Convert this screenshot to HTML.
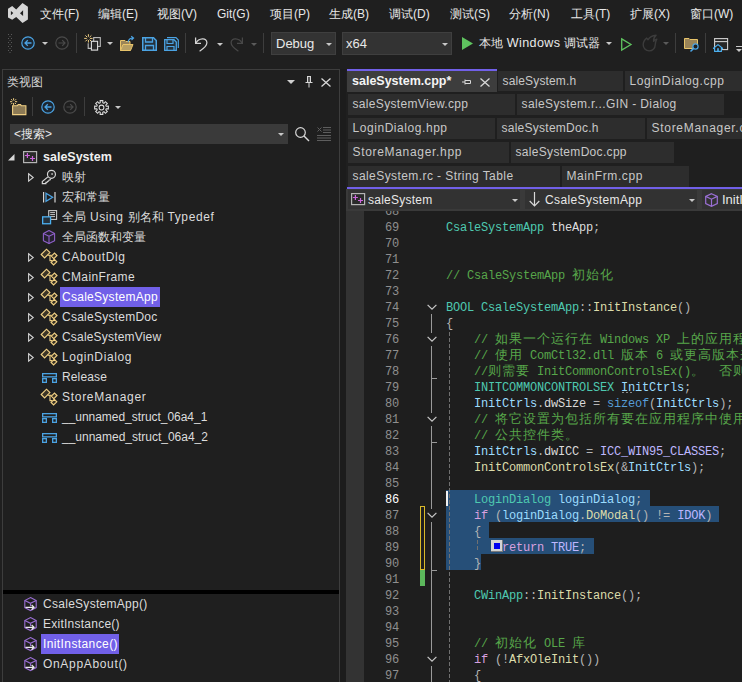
<!DOCTYPE html>
<html><head><meta charset="utf-8">
<style>
*{margin:0;padding:0;box-sizing:border-box}
html,body{width:742px;height:682px;overflow:hidden;background:#1f1f1f}
body{position:relative;font-family:"Liberation Sans",sans-serif;font-size:12px;color:#dcdcdc}
.a{position:absolute}
.t{position:absolute;white-space:pre;line-height:14px}
svg{position:absolute;overflow:visible}
.menu{top:7px;color:#e8e8e8}
.sep{position:absolute;width:1px;background:#3d3d3d}
.combo{position:absolute;background:#333333;border:1px solid #3f3f3f}
.arr{position:absolute;width:0;height:0;border-left:3px solid transparent;border-right:3px solid transparent;border-top:3px solid #c8c8c8}
.arrd{border-top-color:#5a5a5a}
.row{position:absolute;height:20px;line-height:20px;white-space:pre;color:#dcdcdc;font-size:12px}
.zh{font-size:12px;letter-spacing:0}
.tab{position:absolute;background:#2d2d2d;height:21px;line-height:21px;white-space:pre;color:#c8c8c8;padding-left:4.5px;font-size:12px}
.code{position:absolute;left:446px;height:16px;line-height:16px;white-space:pre;font-family:"Liberation Mono",monospace;font-size:12px;letter-spacing:-0.2px;color:#dcdcdc}
.ln{position:absolute;left:360px;width:39px;text-align:right;height:16px;line-height:16px;font-family:"Liberation Mono",monospace;font-size:12px;letter-spacing:-0.2px;color:#8f8f8f}
.c{color:#57a64a}.k{color:#569cd6}.ty{color:#4ec9b0}.fn{color:#dcdcaa}.v{color:#9cdcfe}.m{color:#dadada}.mac{color:#beb7ff}.kw{color:#d8a0df}.op{color:#b4b4b4}
.cj{font-size:13px;letter-spacing:1px}
</style></head><body>

<!-- ===== MENU BAR ===== -->
<svg style="left:4px;top:0px" width="28" height="26" viewBox="0 0 28 26"><path d="M4 8.8 L8.2 6.1 L12.2 9.4 L18.5 3 L23.9 6.7 V19.5 L18.5 22.9 L12.2 17 L8.2 19.8 L4 17.6 Z M6.9 10.9 L9.3 13.1 L6.9 15.3 Z M16 13.2 L19.1 10.3 V16 Z" fill="#d6d6d6" fill-rule="evenodd"/></svg>
<div class="t menu" style="left:40px">文件(F)</div>
<div class="t menu" style="left:98px">编辑(E)</div>
<div class="t menu" style="left:157px">视图(V)</div>
<div class="t menu" style="left:217px">Git(G)</div>
<div class="t menu" style="left:270px">项目(P)</div>
<div class="t menu" style="left:329px">生成(B)</div>
<div class="t menu" style="left:389px">调试(D)</div>
<div class="t menu" style="left:450px">测试(S)</div>
<div class="t menu" style="left:509px">分析(N)</div>
<div class="t menu" style="left:571px">工具(T)</div>
<div class="t menu" style="left:630px">扩展(X)</div>
<div class="t menu" style="left:690px">窗口(W)</div>

<!-- ===== TOOLBAR ===== -->
<svg style="left:8px;top:34px" width="6" height="19"><g fill="#5a5a5a">
<rect x="0" y="0" width="1" height="1"/><rect x="3" y="0" width="1" height="1"/>
<rect x="1.5" y="2" width="1" height="1"/>
<rect x="0" y="4" width="1" height="1"/><rect x="3" y="4" width="1" height="1"/>
<rect x="1.5" y="6" width="1" height="1"/>
<rect x="0" y="8" width="1" height="1"/><rect x="3" y="8" width="1" height="1"/>
<rect x="1.5" y="10" width="1" height="1"/>
<rect x="0" y="12" width="1" height="1"/><rect x="3" y="12" width="1" height="1"/>
<rect x="1.5" y="14" width="1" height="1"/>
<rect x="0" y="16" width="1" height="1"/><rect x="3" y="16" width="1" height="1"/>
<rect x="1.5" y="18" width="1" height="1"/>
</g></svg>
<svg style="left:21px;top:36px" width="14" height="14" viewBox="0 0 14 14"><circle cx="7" cy="7" r="6.2" fill="#1c2630" stroke="#4ba3e3" stroke-width="1.2"/><path d="M10.5 7 H4 M6.8 4.2 L4 7 L6.8 9.8" fill="none" stroke="#4ba3e3" stroke-width="1.3"/></svg>
<div class="arr" style="left:42px;top:42px"></div>
<svg style="left:55px;top:36px" width="14" height="14" viewBox="0 0 14 14"><circle cx="7" cy="7" r="6.2" fill="none" stroke="#4a4a4a" stroke-width="1.2"/><path d="M3.5 7 H10 M7.2 4.2 L10 7 L7.2 9.8" fill="none" stroke="#4a4a4a" stroke-width="1.2"/></svg>
<div class="sep" style="left:76px;top:33px;height:20px"></div>
<svg style="left:82px;top:32px" width="22" height="22" viewBox="0 0 22 22">
<g stroke="#f0cf83" stroke-width="1" stroke-linecap="round"><path d="M6.4 2.6 V4.4 M6.4 8.4 V10.2 M2.6 6.4 H4.4 M8.4 6.4 H10.2 M3.7 3.7 L4.9 4.9 M7.9 7.9 L9.1 9.1 M9.1 3.7 L7.9 4.9 M4.9 7.9 L3.7 9.1"/></g>
<rect x="11.7" y="5.6" width="6.6" height="8.8" fill="#1f1f1f" stroke="#bdbdbd" stroke-width="1.1"/>
<path d="M6.2 11.2 V16.4 H9.4" fill="none" stroke="#bdbdbd" stroke-width="1.1"/>
<rect x="9.4" y="9.3" width="6.2" height="8.8" fill="#2a2a2a" stroke="#e0e0e0" stroke-width="1.1"/>
</svg>
<div class="arr" style="left:107px;top:42px"></div>
<svg style="left:120px;top:36px" width="16" height="15" viewBox="0 0 16 15">
<path d="M0.5 4.5 H5 L6 5.5 H10 V14.5 H0.5 Z" fill="#9a8458" stroke="#e8c46a"/>
<path d="M0.5 14.5 L3 8.5 H13 L10.5 14.5 Z" fill="#b79f63" stroke="#e8c46a"/>
<path d="M8 6 Q9 2 13 2 M11.2 0.3 L13.5 2 L11.5 4" fill="none" stroke="#4ba3e3" stroke-width="1.2"/>
</svg>
<svg style="left:142px;top:37px" width="15" height="14" viewBox="0 0 15 14">
<path d="M0.75 0.75 H11.5 L14.25 3.5 V13.25 H0.75 Z" fill="#25313b" stroke="#4ba3e3" stroke-width="1.5"/>
<path d="M3.5 1 V5 H10.5 V1 M3.5 13 V8.5 H11.5 V13" fill="none" stroke="#4ba3e3" stroke-width="1.3"/>
</svg>
<svg style="left:164px;top:37px" width="15" height="14" viewBox="0 0 15 14">
<path d="M3 0.7 H12 L14.3 3 V11" fill="none" stroke="#4ba3e3" stroke-width="1.2"/>
<path d="M0.7 2.7 H10 L12.3 5 V13.3 H0.7 Z" fill="#25313b" stroke="#4ba3e3" stroke-width="1.3"/>
<path d="M3 3 V6.5 H9 V3 M3 13 V9.5 H10 V13" fill="none" stroke="#4ba3e3" stroke-width="1.2"/>
</svg>
<div class="sep" style="left:185px;top:33px;height:20px"></div>
<svg style="left:190px;top:32px" width="22" height="22" viewBox="0 0 22 22"><path d="M5.6 5.6 V11.4 H11" fill="none" stroke="#d4d4d4" stroke-width="1.25"/><path d="M6 11 C8.6 6.2 16.9 5 16.9 10.8 C16.9 13.8 13.6 16.6 9.6 19.2" fill="none" stroke="#d4d4d4" stroke-width="1.25"/></svg>
<div class="arr" style="left:217px;top:43px"></div>
<svg style="left:226px;top:32px" width="22" height="22" viewBox="0 0 22 22"><path d="M16.4 5.6 V11.4 H11" fill="none" stroke="#484848" stroke-width="1.25"/><path d="M16 11 C13.4 6.2 5.1 5 5.1 10.8 C5.1 13.8 8.4 16.6 12.4 19.2" fill="none" stroke="#484848" stroke-width="1.25"/></svg>
<div class="arr arrd" style="left:251px;top:43px"></div>
<div class="sep" style="left:263px;top:33px;height:20px"></div>
<div class="combo" style="left:271px;top:32px;width:65px;height:23px"></div>
<div class="t" style="left:276px;top:37px;color:#e8e8e8;font-size:13px">Debug</div>
<div class="arr" style="left:326px;top:43px"></div>
<div class="combo" style="left:342px;top:32px;width:110px;height:23px"></div>
<div class="t" style="left:346px;top:37px;color:#e8e8e8;font-size:13px">x64</div>
<div class="arr" style="left:442px;top:43px"></div>
<svg style="left:462px;top:37px" width="11" height="13" viewBox="0 0 11 13"><path d="M0 0 L11 6.5 L0 13 Z" fill="#5fc35f"/></svg>
<div class="t" style="left:479px;top:36px;color:#e8e8e8"><span>本地</span><span style="font-size:12.6px;letter-spacing:0.35px"> Windows </span><span>调试器</span></div>
<div class="arr" style="left:606px;top:42px"></div>
<svg style="left:621px;top:38px" width="11" height="13" viewBox="0 0 11 13"><path d="M0.7 0.9 L10 6.5 L0.7 12.1 Z" fill="none" stroke="#5fc35f" stroke-width="1.3"/></svg>
<svg style="left:638px;top:32px" width="24" height="22" viewBox="0 0 24 22"><path d="M8.7 6.1 Q5.2 8.6 5.2 12.8 A5.9 5.9 0 0 0 17.2 13 Q17.3 9.8 18.8 7.1 Q16.5 7.8 15.6 9.3 Q15.2 5.8 18.1 3.2 Q12.2 3.6 10.1 7.8 Z" fill="none" stroke="#3c3c3c" stroke-width="1.4" stroke-linejoin="round"/></svg>
<div class="arr arrd" style="left:663px;top:42px"></div>
<div class="sep" style="left:675px;top:33px;height:20px"></div>
<svg style="left:684px;top:38px" width="16" height="14" viewBox="0 0 16 14">
<path d="M0.5 0.5 H5 L6 1.5 H13.5 V10.5 H0.5 Z" fill="#9a8458" stroke="#e8c46a"/>
<circle cx="11.5" cy="8.5" r="2.6" fill="#1f1f1f" stroke="#4ba3e3" stroke-width="1.2"/>
<path d="M9.6 10.4 L6.5 13.5" stroke="#4ba3e3" stroke-width="1.5"/>
</svg>
<div class="sep" style="left:705px;top:33px;height:20px"></div>
<svg style="left:712px;top:36px" width="18" height="17" viewBox="0 0 18 17"><rect x="2.6" y="2.6" width="13" height="11" fill="#262626" stroke="#cfcfcf" stroke-width="1.1"/><path d="M2.6 5.6 H15.6" stroke="#cfcfcf" stroke-width="1.1"/><path d="M1.5 12.3 L6 8.6 L10.5 12.3 H9.4 V15.4 H2.6 V12.3 Z" fill="#1f1f1f" stroke="#4cb0f0" stroke-width="1.15" stroke-linejoin="round"/><rect x="5.2" y="12.2" width="1.6" height="3" fill="#4cb0f0"/></svg>
<svg style="left:736px;top:46px" width="6" height="8" viewBox="0 0 6 8"><path d="M0 0.5 H6" stroke="#c8c8c8"/><path d="M0 3 H6 L3 6 Z" fill="#c8c8c8"/></svg>

<!-- ===== LEFT PANEL (CLASS VIEW) ===== -->
<div class="a" style="left:2px;top:69px;width:338px;height:620px;border:1px solid #3d3d3d;background:#1f1f1f"></div>
<div class="t" style="left:7px;top:75px;color:#d4d4d4;font-size:12.4px">类视图</div>
<div class="arr" style="left:287px;top:80px;border-width:4px 4px 0 4px;border-top-color:#d0d0d0"></div>
<svg style="left:305px;top:76px" width="8" height="12" viewBox="0 0 8 12"><path d="M2 0.5 H6 M2.5 0.5 V6.5 M5.5 0.5 V6.5 M0.5 6.5 H7.5 M4 6.5 V11.5" fill="none" stroke="#d8d8d8"/><rect x="2.5" y="1" width="3" height="5.5" fill="#d8d8d8" opacity="0.3"/></svg>
<svg style="left:321px;top:78px" width="10" height="9" viewBox="0 0 10 9"><path d="M0.5 0.5 L9.5 8.5 M9.5 0.5 L0.5 8.5" stroke="#d8d8d8" stroke-width="1.3"/></svg>

<svg style="left:6px;top:94px" width="22" height="22" viewBox="0 0 22 22">
<path d="M6.6 11.8 H11.2 L12.2 10.6 H14.6 L15.3 11.8 H19.9 V20.6 H6.6 Z" fill="#8c7a55" stroke="#f0cf83" stroke-width="1.1"/>
<g stroke="#f0cf83" stroke-width="1" stroke-linecap="round"><path d="M7.6 4.6 V6 M7.6 9.4 V10.8 M4.4 7.7 H5.8 M9.4 7.7 H10.8 M5.4 5.5 L6.2 6.3 M9 9.1 L9.8 9.9 M9.8 5.5 L9 6.3 M6.2 9.1 L5.4 9.9"/></g>
</svg>
<div class="sep" style="left:32px;top:97px;height:19px"></div>
<svg style="left:41px;top:100px" width="14" height="14" viewBox="0 0 14 14"><circle cx="7" cy="7" r="6.2" fill="#1c2630" stroke="#4ba3e3" stroke-width="1.2"/><path d="M10.5 7 H4 M6.8 4.2 L4 7 L6.8 9.8" fill="none" stroke="#4ba3e3" stroke-width="1.3"/></svg>
<svg style="left:63px;top:100px" width="14" height="14" viewBox="0 0 14 14"><circle cx="7" cy="7" r="6.2" fill="none" stroke="#4a4a4a" stroke-width="1.2"/><path d="M3.5 7 H10 M7.2 4.2 L10 7 L7.2 9.8" fill="none" stroke="#4a4a4a" stroke-width="1.2"/></svg>
<div class="sep" style="left:84px;top:97px;height:19px"></div>
<svg style="left:94px;top:100px" width="15" height="15" viewBox="0 0 15 15"><path d="M12.23 6.23 L14.37 6.16 L14.37 8.84 L12.23 8.77 L11.74 9.95 L13.30 11.41 L11.41 13.30 L9.95 11.74 L8.77 12.23 L8.84 14.37 L6.16 14.37 L6.23 12.23 L5.05 11.74 L3.59 13.30 L1.70 11.41 L3.26 9.95 L2.77 8.77 L0.63 8.84 L0.63 6.16 L2.77 6.23 L3.26 5.05 L1.70 3.59 L3.59 1.70 L5.05 3.26 L6.23 2.77 L6.16 0.63 L8.84 0.63 L8.77 2.77 L9.95 3.26 L11.41 1.70 L13.30 3.59 L11.74 5.05 Z" fill="none" stroke="#dcdcdc" stroke-width="1.05" stroke-linejoin="miter"/><circle cx="7.5" cy="7.5" r="2.4" fill="none" stroke="#dcdcdc" stroke-width="1.05"/></svg>
<div class="arr" style="left:115px;top:106px"></div>

<div class="a" style="left:10px;top:124px;width:278px;height:20px;background:#3a3a3a"></div>
<div class="t" style="left:14px;top:127px;color:#e8e8e8">&lt;搜索&gt;</div>
<div class="arr" style="left:278px;top:133px"></div>
<svg style="left:295px;top:127px" width="15" height="15" viewBox="0 0 15 15"><circle cx="5.5" cy="5.5" r="4.8" fill="none" stroke="#d8d8d8" stroke-width="1.2"/><path d="M9 9 L14 14" stroke="#d8d8d8" stroke-width="1.4"/></svg>
<svg style="left:317px;top:127px" width="15" height="14" viewBox="0 0 15 14"><g stroke="#5e5e5e" stroke-width="1"><path d="M0.5 0.5 L4.5 4.5 M4.5 0.5 L0.5 4.5 M6 0.5 H14 M6 3 H14 M6 5.5 H14 M0 8.5 H14 M0 11 H14 M0 13.5 H14"/></g></svg>

<!-- tree -->

<svg style="left:8px;top:154px" width="7" height="7" viewBox="0 0 7 7"><path d="M6.5 0 V6.5 H0 Z" fill="#d8d8d8"/></svg>
<svg style="left:23px;top:151px" width="15" height="12" viewBox="0 0 15 12"><rect x="0.6" y="0.6" width="13" height="11" fill="#2a2a2a" stroke="#b4b4b4" stroke-width="1.2"/><path d="M4.4 2 V7 M1.9 4.5 H6.9 M9.5 5 V10 M7 7.5 H12" stroke="#cc66dd" stroke-width="1.2"/></svg>
<div class="row" style="left:43px;top:147px;font-weight:bold;color:#f0f0f0;font-size:12.5px">saleSystem</div>
<svg style="left:28px;top:173px" width="6" height="9" viewBox="0 0 6 9"><path d="M0.6 0.8 L5.2 4.5 L0.6 8.2 Z" fill="none" stroke="#d0d0d0" stroke-width="1.1"/></svg>
<svg style="left:38px;top:167px" width="22" height="22" viewBox="0 0 22 22"><g fill="none" stroke="#d8d8d8" stroke-width="1.15" stroke-linejoin="miter"><path d="M9.9 9.9 L4.3 14.5 V16.6 H7.9 V15.3 H9 L9.6 14.2 H10.5 L11.1 13 H12 L12.6 11.9"/><circle cx="13.45" cy="7.3" r="4" fill="#262626"/></g><rect x="13.3" y="6.2" width="1.6" height="1.6" fill="#bdbdbd"/></svg>
<div class="row" id="tr0" style="left:62px;top:167px;letter-spacing:0.000px"><span class="zh">映射</span></div>
<svg style="left:43px;top:192px" width="13" height="11" viewBox="0 0 13 11"><path d="M0.6 0 V10.5 M12 0 V10.5" stroke="#d4d4d4" stroke-width="1.2"/><path d="M3 1.2 L9.6 5.25 L3 9.3 Z" fill="none" stroke="#4ba3e3" stroke-width="1.3"/></svg>
<div class="row" id="tr1" style="left:62px;top:187px;letter-spacing:0.000px"><span class="zh">宏和常量</span></div>
<svg style="left:38px;top:206px" width="22" height="22" viewBox="0 0 22 22"><rect x="10.7" y="4.6" width="7.9" height="8.8" fill="#1f1f1f" stroke="#c8c8c8" stroke-width="1.1"/><path d="M12.2 6.6 H17 M12.2 8.6 H17 M12.2 10.6 H17" stroke="#c8c8c8" stroke-width="1"/><rect x="4.65" y="10.85" width="7.9" height="6.9" fill="#25313b" stroke="#4cb0f0" stroke-width="1.3"/></svg>
<div class="row" id="tr2" style="left:62px;top:207px;letter-spacing:0.600px"><span class="zh">全局</span> Using <span class="zh">别名和</span> Typedef</div>
<svg style="left:38px;top:226px" width="22" height="22" viewBox="0 0 22 22"><g fill="#262230" stroke="#8e60c8" stroke-width="1.1" stroke-linejoin="round"><path d="M11 4.6 L16.6 7.6 V14.8 L11 17.6 L5.4 14.8 V7.6 Z"/><path d="M5.4 7.6 L11 10.3 L16.6 7.6 M11 10.3 V17.6" fill="none"/></g></svg>
<div class="row" id="tr3" style="left:62px;top:227px;letter-spacing:0.000px"><span class="zh">全局函数和变量</span></div>
<svg style="left:28px;top:253px" width="6" height="9" viewBox="0 0 6 9"><path d="M0.6 0.8 L5.2 4.5 L0.6 8.2 Z" fill="none" stroke="#d0d0d0" stroke-width="1.1"/></svg>
<svg style="left:38px;top:246px" width="22" height="22" viewBox="0 0 22 22"><g fill="#3b3426" stroke="#f0cf83" stroke-width="1.15" stroke-linejoin="miter"><path d="M3.2 8.5 L8.5 3.2 L11.9 6.6 L6.6 11.9 Z"/><path d="M13.3 10.1 L16.5 7 L19 9.5 L15.8 12.6 Z"/><path d="M13.1 16.4 L16.3 13.3 L18.8 15.8 L15.6 18.9 Z"/></g><path d="M9.6 9.2 H13.6 M12 9.2 V14.6 H14.3" fill="none" stroke="#f0cf83" stroke-width="1.15"/></svg>
<div class="row" id="tr4" style="left:62px;top:247px;letter-spacing:0.600px">CAboutDlg</div>
<svg style="left:28px;top:273px" width="6" height="9" viewBox="0 0 6 9"><path d="M0.6 0.8 L5.2 4.5 L0.6 8.2 Z" fill="none" stroke="#d0d0d0" stroke-width="1.1"/></svg>
<svg style="left:38px;top:266px" width="22" height="22" viewBox="0 0 22 22"><g fill="#3b3426" stroke="#f0cf83" stroke-width="1.15" stroke-linejoin="miter"><path d="M3.2 8.5 L8.5 3.2 L11.9 6.6 L6.6 11.9 Z"/><path d="M13.3 10.1 L16.5 7 L19 9.5 L15.8 12.6 Z"/><path d="M13.1 16.4 L16.3 13.3 L18.8 15.8 L15.6 18.9 Z"/></g><path d="M9.6 9.2 H13.6 M12 9.2 V14.6 H14.3" fill="none" stroke="#f0cf83" stroke-width="1.15"/></svg>
<div class="row" id="tr5" style="left:62px;top:267px;letter-spacing:0.356px">CMainFrame</div>
<svg style="left:28px;top:293px" width="6" height="9" viewBox="0 0 6 9"><path d="M0.6 0.8 L5.2 4.5 L0.6 8.2 Z" fill="none" stroke="#d0d0d0" stroke-width="1.1"/></svg>
<svg style="left:38px;top:286px" width="22" height="22" viewBox="0 0 22 22"><g fill="#3b3426" stroke="#f0cf83" stroke-width="1.15" stroke-linejoin="miter"><path d="M3.2 8.5 L8.5 3.2 L11.9 6.6 L6.6 11.9 Z"/><path d="M13.3 10.1 L16.5 7 L19 9.5 L15.8 12.6 Z"/><path d="M13.1 16.4 L16.3 13.3 L18.8 15.8 L15.6 18.9 Z"/></g><path d="M9.6 9.2 H13.6 M12 9.2 V14.6 H14.3" fill="none" stroke="#f0cf83" stroke-width="1.15"/></svg>
<div class="a" style="left:60px;top:287px;width:100px;height:20px;background:#7160e8"></div>
<div class="row" id="tr6" style="left:62px;top:287px;letter-spacing:0.277px;color:#ffffff">CsaleSystemApp</div>
<svg style="left:28px;top:313px" width="6" height="9" viewBox="0 0 6 9"><path d="M0.6 0.8 L5.2 4.5 L0.6 8.2 Z" fill="none" stroke="#d0d0d0" stroke-width="1.1"/></svg>
<svg style="left:38px;top:306px" width="22" height="22" viewBox="0 0 22 22"><g fill="#3b3426" stroke="#f0cf83" stroke-width="1.15" stroke-linejoin="miter"><path d="M3.2 8.5 L8.5 3.2 L11.9 6.6 L6.6 11.9 Z"/><path d="M13.3 10.1 L16.5 7 L19 9.5 L15.8 12.6 Z"/><path d="M13.1 16.4 L16.3 13.3 L18.8 15.8 L15.6 18.9 Z"/></g><path d="M9.6 9.2 H13.6 M12 9.2 V14.6 H14.3" fill="none" stroke="#f0cf83" stroke-width="1.15"/></svg>
<div class="row" id="tr7" style="left:62px;top:307px;letter-spacing:0.246px">CsaleSystemDoc</div>
<svg style="left:28px;top:333px" width="6" height="9" viewBox="0 0 6 9"><path d="M0.6 0.8 L5.2 4.5 L0.6 8.2 Z" fill="none" stroke="#d0d0d0" stroke-width="1.1"/></svg>
<svg style="left:38px;top:326px" width="22" height="22" viewBox="0 0 22 22"><g fill="#3b3426" stroke="#f0cf83" stroke-width="1.15" stroke-linejoin="miter"><path d="M3.2 8.5 L8.5 3.2 L11.9 6.6 L6.6 11.9 Z"/><path d="M13.3 10.1 L16.5 7 L19 9.5 L15.8 12.6 Z"/><path d="M13.1 16.4 L16.3 13.3 L18.8 15.8 L15.6 18.9 Z"/></g><path d="M9.6 9.2 H13.6 M12 9.2 V14.6 H14.3" fill="none" stroke="#f0cf83" stroke-width="1.15"/></svg>
<div class="row" id="tr8" style="left:62px;top:327px;letter-spacing:0.186px">CsaleSystemView</div>
<svg style="left:28px;top:353px" width="6" height="9" viewBox="0 0 6 9"><path d="M0.6 0.8 L5.2 4.5 L0.6 8.2 Z" fill="none" stroke="#d0d0d0" stroke-width="1.1"/></svg>
<svg style="left:38px;top:346px" width="22" height="22" viewBox="0 0 22 22"><g fill="#3b3426" stroke="#f0cf83" stroke-width="1.15" stroke-linejoin="miter"><path d="M3.2 8.5 L8.5 3.2 L11.9 6.6 L6.6 11.9 Z"/><path d="M13.3 10.1 L16.5 7 L19 9.5 L15.8 12.6 Z"/><path d="M13.1 16.4 L16.3 13.3 L18.8 15.8 L15.6 18.9 Z"/></g><path d="M9.6 9.2 H13.6 M12 9.2 V14.6 H14.3" fill="none" stroke="#f0cf83" stroke-width="1.15"/></svg>
<div class="row" id="tr9" style="left:62px;top:347px;letter-spacing:0.600px">LoginDialog</div>
<svg style="left:42px;top:373px" width="15" height="10" viewBox="0 0 15 10"><g fill="none" stroke="#4ba3e3" stroke-width="1.3"><rect x="0.65" y="0.65" width="13.7" height="3.2"/><rect x="0.65" y="5.65" width="3.7" height="3.7"/><rect x="10.65" y="5.65" width="3.7" height="3.7"/></g></svg>
<div class="row" id="tr10" style="left:62px;top:367px;letter-spacing:0.133px">Release</div>
<svg style="left:38px;top:386px" width="22" height="22" viewBox="0 0 22 22"><g fill="#3b3426" stroke="#f0cf83" stroke-width="1.15" stroke-linejoin="miter"><path d="M3.2 8.5 L8.5 3.2 L11.9 6.6 L6.6 11.9 Z"/><path d="M13.3 10.1 L16.5 7 L19 9.5 L15.8 12.6 Z"/><path d="M13.1 16.4 L16.3 13.3 L18.8 15.8 L15.6 18.9 Z"/></g><path d="M9.6 9.2 H13.6 M12 9.2 V14.6 H14.3" fill="none" stroke="#f0cf83" stroke-width="1.15"/></svg>
<div class="row" id="tr11" style="left:62px;top:387px;letter-spacing:0.709px">StoreManager</div>
<svg style="left:42px;top:413px" width="15" height="10" viewBox="0 0 15 10"><g fill="none" stroke="#4ba3e3" stroke-width="1.3"><rect x="0.65" y="0.65" width="13.7" height="3.2"/><rect x="0.65" y="5.65" width="3.7" height="3.7"/><rect x="10.65" y="5.65" width="3.7" height="3.7"/></g></svg>
<div class="row" id="tr12" style="left:62px;top:407px;letter-spacing:-0.036px">__unnamed_struct_06a4_1</div>
<svg style="left:42px;top:433px" width="15" height="10" viewBox="0 0 15 10"><g fill="none" stroke="#4ba3e3" stroke-width="1.3"><rect x="0.65" y="0.65" width="13.7" height="3.2"/><rect x="0.65" y="5.65" width="3.7" height="3.7"/><rect x="10.65" y="5.65" width="3.7" height="3.7"/></g></svg>
<div class="row" id="tr13" style="left:62px;top:427px;letter-spacing:-0.009px">__unnamed_struct_06a4_2</div>
<svg style="left:24px;top:597px" width="13" height="15" viewBox="0 0 13 15"><g fill="none" stroke="#9a6fd4" stroke-width="1.1"><path d="M6.5 0.6 L12.2 3.5 V10.6 L6.5 13.6 L0.8 10.6 V3.5 Z"/><path d="M0.8 3.5 L6.5 6.3 L12.2 3.5 M6.5 6.3 V9"/></g><path d="M1.5 10.3 H10 M7.6 7.9 L10 10.3 L7.6 12.7" fill="none" stroke="#eaeaea" stroke-width="1.3"/></svg>
<div class="row" id="br0" style="left:43px;top:594px;letter-spacing:0.280px">CsaleSystemApp()</div>
<svg style="left:24px;top:617px" width="13" height="15" viewBox="0 0 13 15"><g fill="none" stroke="#9a6fd4" stroke-width="1.1"><path d="M6.5 0.6 L12.2 3.5 V10.6 L6.5 13.6 L0.8 10.6 V3.5 Z"/><path d="M0.8 3.5 L6.5 6.3 L12.2 3.5 M6.5 6.3 V9"/></g><path d="M1.5 10.3 H10 M7.6 7.9 L10 10.3 L7.6 12.7" fill="none" stroke="#eaeaea" stroke-width="1.3"/></svg>
<div class="row" id="br1" style="left:43px;top:614px;letter-spacing:0.246px">ExitInstance()</div>
<svg style="left:24px;top:637px" width="13" height="15" viewBox="0 0 13 15"><g fill="none" stroke="#9a6fd4" stroke-width="1.1"><path d="M6.5 0.6 L12.2 3.5 V10.6 L6.5 13.6 L0.8 10.6 V3.5 Z"/><path d="M0.8 3.5 L6.5 6.3 L12.2 3.5 M6.5 6.3 V9"/></g><path d="M1.5 10.3 H10 M7.6 7.9 L10 10.3 L7.6 12.7" fill="none" stroke="#eaeaea" stroke-width="1.3"/></svg>
<div class="a" style="left:41px;top:634px;width:78px;height:20px;background:#7160e8"></div>
<div class="row" id="br2" style="left:43px;top:634px;letter-spacing:0.400px;color:#ffffff">InitInstance()</div>
<svg style="left:24px;top:657px" width="13" height="15" viewBox="0 0 13 15"><g fill="none" stroke="#9a6fd4" stroke-width="1.1"><path d="M6.5 0.6 L12.2 3.5 V10.6 L6.5 13.6 L0.8 10.6 V3.5 Z"/><path d="M0.8 3.5 L6.5 6.3 L12.2 3.5 M6.5 6.3 V9"/></g><path d="M1.5 10.3 H10 M7.6 7.9 L10 10.3 L7.6 12.7" fill="none" stroke="#eaeaea" stroke-width="1.3"/></svg>
<div class="row" id="br3" style="left:43px;top:654px;letter-spacing:0.673px">OnAppAbout()</div>
<div class="a" style="left:3px;top:590px;width:336px;height:4px;background:#000000"></div>
<div class="a" style="left:340px;top:69px;width:6px;height:613px;background:#1c1c1c"></div>
<div class="a" style="left:347px;top:69px;width:150px;height:2px;background:#7160e8"></div>
<div class="a" style="left:347px;top:71px;width:150px;height:21px;background:#3d3d3d"></div>
<div class="t" style="left:352px;top:74px;font-weight:bold;color:#f4f4f4;font-size:12.5px">saleSystem.cpp*</div>
<svg style="left:462px;top:79px" width="9" height="6" viewBox="0 0 9 6"><path d="M0 3 H3 M3 0.5 V5.5 M3 1.5 H8.5 V4.5 H3" fill="none" stroke="#d8d8d8" stroke-width="1"/></svg>
<svg style="left:480px;top:78px" width="10" height="9" viewBox="0 0 10 9"><path d="M0.5 0.5 L9.5 8.5 M9.5 0.5 L0.5 8.5" stroke="#d8d8d8" stroke-width="1.3"/></svg>
<div class="tab" id="tb498_71" style="left:498px;top:71px;width:125px;height:20px;line-height:20px;letter-spacing:0.145px">saleSystem.h</div>
<div class="tab" id="tb625_71" style="left:625px;top:71px;width:117px;height:20px;line-height:20px;letter-spacing:0.600px">LoginDialog.cpp</div>
<div class="tab" id="tb348_94" style="left:348px;top:94px;width:167px;height:21px;line-height:21px;letter-spacing:0.329px">saleSystemView.cpp</div>
<div class="tab" id="tb517_94" style="left:517px;top:94px;width:207px;height:21px;line-height:21px;letter-spacing:0.385px">saleSystem.r...GIN - Dialog</div>
<div class="tab" id="tb348_118" style="left:348px;top:118px;width:147px;height:21px;line-height:21px;letter-spacing:0.557px">LoginDialog.hpp</div>
<div class="tab" id="tb497_118" style="left:497px;top:118px;width:148px;height:21px;line-height:21px;letter-spacing:0.257px">saleSystemDoc.h</div>
<div class="tab" id="tb647_118" style="left:647px;top:118px;width:95px;height:21px;line-height:21px;letter-spacing:0.707px">StoreManager.cpp</div>
<div class="tab" id="tb348_142" style="left:348px;top:142px;width:161px;height:21px;line-height:21px;letter-spacing:0.680px">StoreManager.hpp</div>
<div class="tab" id="tb511_142" style="left:511px;top:142px;width:163px;height:21px;line-height:21px;letter-spacing:0.312px">saleSystemDoc.cpp</div>
<div class="tab" id="tb348_166" style="left:348px;top:166px;width:212px;height:21px;line-height:21px;letter-spacing:0.422px">saleSystem.rc - String Table</div>
<div class="tab" id="tb562_166" style="left:562px;top:166px;width:127px;height:21px;line-height:21px;letter-spacing:0.580px">MainFrm.cpp</div>
<div class="a" style="left:347px;top:187px;width:395px;height:2px;background:#7160e8"></div>
<div class="a" style="left:346px;top:210px;width:396px;height:472px;overflow:hidden;background:#1e1e1e">
<div class="a" style="left:0;top:0;width:18px;height:472px;background:#333333"></div>
<div class="a" style="left:100px;top:280px;width:204px;height:16px;background:#264f78"></div>
<div class="a" style="left:100px;top:296px;width:273px;height:16px;background:#264f78"></div>
<div class="a" style="left:100px;top:312px;width:43px;height:16px;background:#264f78"></div>
<div class="a" style="left:100px;top:328px;width:148px;height:16px;background:#264f78"></div>
<div class="a" style="left:100px;top:344px;width:35px;height:16px;background:#264f78"></div>
<div class="ln" style="left:14px;top:-6px">68</div>
<div class="ln" style="left:14px;top:10px">69</div>
<div class="code" style="left:100px;top:10px"><span class="ty">CsaleSystemApp</span> theApp<span class="op">;</span></div>
<div class="ln" style="left:14px;top:26px">70</div>
<div class="ln" style="left:14px;top:42px">71</div>
<div class="ln" style="left:14px;top:58px">72</div>
<div class="code" style="left:100px;top:58px"><span class="c">// CsaleSystemApp <span class="cj">初始化</span></span></div>
<div class="ln" style="left:14px;top:74px">73</div>
<div class="ln" style="left:14px;top:90px">74</div>
<div class="code" style="left:100px;top:90px"><span class="ty">BOOL</span> <span class="ty">CsaleSystemApp</span><span class="op">::</span><span class="fn">InitInstance</span><span class="op">()</span></div>
<div class="ln" style="left:14px;top:106px">75</div>
<div class="code" style="left:100px;top:106px"><span class="op">{</span></div>
<div class="ln" style="left:14px;top:122px">76</div>
<div class="code" style="left:100px;top:122px">    <span class="c">// <span class="cj">如果一个运行在</span> Windows XP <span class="cj">上的应用程序清单指定要</span></span></div>
<div class="ln" style="left:14px;top:138px">77</div>
<div class="code" style="left:100px;top:138px">    <span class="c">// <span class="cj">使用</span> ComCtl32.dll <span class="cj">版本</span> 6 <span class="cj">或更高版本来启用可视化方式，</span></span></div>
<div class="ln" style="left:14px;top:154px">78</div>
<div class="code" style="left:100px;top:154px">    <span class="c">//<span class="cj">则需要</span> InitCommonControlsEx()<span class="cj">。</span>  <span class="cj">否则，将无法创建窗口。</span></span></div>
<div class="ln" style="left:14px;top:170px">79</div>
<div class="code" style="left:100px;top:170px">    <span class="ty">INITCOMMONCONTROLSEX</span> <span class="v">InitCtrls</span><span class="op">;</span></div>
<div class="ln" style="left:14px;top:186px">80</div>
<div class="code" style="left:100px;top:186px">    <span class="v">InitCtrls</span><span class="op">.</span><span class="m">dwSize</span><span class="op"> = </span><span class="k">sizeof</span><span class="op">(</span><span class="v">InitCtrls</span><span class="op">);</span></div>
<div class="ln" style="left:14px;top:202px">81</div>
<div class="code" style="left:100px;top:202px">    <span class="c">// <span class="cj">将它设置为包括所有要在应用程序中使用的</span></span></div>
<div class="ln" style="left:14px;top:218px">82</div>
<div class="code" style="left:100px;top:218px">    <span class="c">// <span class="cj">公共控件类。</span></span></div>
<div class="ln" style="left:14px;top:234px">83</div>
<div class="code" style="left:100px;top:234px">    <span class="v">InitCtrls</span><span class="op">.</span><span class="m">dwICC</span><span class="op"> = </span><span class="mac">ICC_WIN95_CLASSES</span><span class="op">;</span></div>
<div class="ln" style="left:14px;top:250px">84</div>
<div class="code" style="left:100px;top:250px">    <span class="fn">InitCommonControlsEx</span><span class="op">(&amp;</span><span class="v">InitCtrls</span><span class="op">);</span></div>
<div class="ln" style="left:14px;top:266px">85</div>
<div class="ln" style="left:14px;top:282px;color:#ffffff">86</div>
<div class="code" style="left:100px;top:282px">    <span class="ty">LoginDialog</span> <span class="v">loginDialog</span><span class="op">;</span></div>
<div class="ln" style="left:14px;top:298px">87</div>
<div class="code" style="left:100px;top:298px">    <span class="kw">if</span> <span class="op">(</span><span class="v">loginDialog</span><span class="op">.</span><span class="fn">DoModal</span><span class="op">() != </span><span class="mac">IDOK</span><span class="op">)</span></div>
<div class="ln" style="left:14px;top:314px">88</div>
<div class="code" style="left:100px;top:314px">    <span class="op">{</span></div>
<div class="ln" style="left:14px;top:330px">89</div>
<div class="code" style="left:100px;top:330px">        <span class="kw">return</span> <span class="mac">TRUE</span><span class="op">;</span></div>
<div class="ln" style="left:14px;top:346px">90</div>
<div class="code" style="left:100px;top:346px">    <span class="op">}</span></div>
<div class="ln" style="left:14px;top:362px">91</div>
<div class="ln" style="left:14px;top:378px">92</div>
<div class="code" style="left:100px;top:378px">    <span class="ty">CWinApp</span><span class="op">::</span><span class="fn">InitInstance</span><span class="op">();</span></div>
<div class="ln" style="left:14px;top:394px">93</div>
<div class="ln" style="left:14px;top:410px">94</div>
<div class="ln" style="left:14px;top:426px">95</div>
<div class="code" style="left:100px;top:426px">    <span class="c">// <span class="cj">初始化</span> OLE <span class="cj">库</span></span></div>
<div class="ln" style="left:14px;top:442px">96</div>
<div class="code" style="left:100px;top:442px">    <span class="kw">if</span> <span class="op">(!</span><span class="fn">AfxOleInit</span><span class="op">())</span></div>
<div class="ln" style="left:14px;top:458px">97</div>
<div class="code" style="left:100px;top:458px">    <span class="op">{</span></div>
<svg style="left:81px;top:94px" width="10" height="7" viewBox="0 0 10 7"><path d="M0.6 0.8 L5 5.2 L9.4 0.8" fill="none" stroke="#c8c8c8" stroke-width="1.2"/></svg>
<svg style="left:81px;top:126px" width="10" height="7" viewBox="0 0 10 7"><path d="M0.6 0.8 L5 5.2 L9.4 0.8" fill="none" stroke="#c8c8c8" stroke-width="1.2"/></svg>
<svg style="left:81px;top:206px" width="10" height="7" viewBox="0 0 10 7"><path d="M0.6 0.8 L5 5.2 L9.4 0.8" fill="none" stroke="#c8c8c8" stroke-width="1.2"/></svg>
<svg style="left:81px;top:302px" width="10" height="7" viewBox="0 0 10 7"><path d="M0.6 0.8 L5 5.2 L9.4 0.8" fill="none" stroke="#c8c8c8" stroke-width="1.2"/></svg>
<svg style="left:81px;top:446px" width="10" height="7" viewBox="0 0 10 7"><path d="M0.6 0.8 L5 5.2 L9.4 0.8" fill="none" stroke="#c8c8c8" stroke-width="1.2"/></svg>
<div class="a" style="left:85px;top:104px;width:1px;height:19px;background:#9a9a9a"></div>
<div class="a" style="left:85px;top:136px;width:1px;height:67px;background:#9a9a9a"></div>
<div class="a" style="left:85px;top:216px;width:1px;height:83px;background:#9a9a9a"></div>
<div class="a" style="left:85px;top:312px;width:1px;height:131px;background:#9a9a9a"></div>
<div class="a" style="left:85px;top:456px;width:1px;height:16px;background:#9a9a9a"></div>
<div class="a" style="left:86px;top:168px;width:5px;height:1px;background:#9a9a9a"></div>
<div class="a" style="left:86px;top:232px;width:5px;height:1px;background:#9a9a9a"></div>
<div class="a" style="left:86px;top:360px;width:5px;height:1px;background:#9a9a9a"></div>
<div class="a" style="left:103px;top:122px;width:1px;height:350px;background:repeating-linear-gradient(to bottom,#707070 0,#707070 4px,transparent 4px,transparent 6px)"></div>
<div class="a" style="left:131px;top:330px;width:1px;height:10px;background:repeating-linear-gradient(to bottom,#707070 0,#707070 4px,transparent 4px,transparent 6px)"></div>
<div class="a" style="left:74px;top:296px;width:5px;height:64px;border:1px solid #d9b92a"></div>
<div class="a" style="left:74px;top:360px;width:5px;height:16px;background:#5cb85c"></div>
<div class="a" style="left:100px;top:281px;width:2px;height:15px;background:#f0f0f0"></div>
<div class="a" style="left:276px;top:182px;width:2px;height:1px;background:#8a8a8a"></div>
<div class="a" style="left:280px;top:182px;width:2px;height:1px;background:#8a8a8a"></div>
<div class="a" style="left:284px;top:182px;width:2px;height:1px;background:#8a8a8a"></div>
<div class="a" style="left:145px;top:330px;width:12px;height:12px;background:#d4d4d4;border-right:1px solid #7a7a7a;border-bottom:1px solid #7a7a7a"></div>
<div class="a" style="left:148px;top:333px;width:6px;height:6px;background:#0000f0"></div>
</div>
<div class="a" style="left:346px;top:189px;width:396px;height:22px;background:#3a3a3a"></div>
<div class="a" style="left:348px;top:190px;width:172px;height:19px;background:#323232"></div>
<div class="a" style="left:525px;top:190px;width:172px;height:19px;background:#323232"></div>
<div class="a" style="left:702px;top:190px;width:40px;height:19px;background:#323232"></div>
<svg style="left:351px;top:193px" width="15" height="13" viewBox="0 0 15 13"><rect x="0.6" y="0.6" width="13" height="11" fill="#2a2a2a" stroke="#b4b4b4" stroke-width="1.2"/><path d="M4.4 2 V7 M1.9 4.5 H6.9 M9.5 5 V10 M7 7.5 H12" stroke="#cc66dd" stroke-width="1.2"/></svg>
<div class="t" id="nv1" style="left:368px;top:193px;color:#e8e8e8;font-size:12px;letter-spacing:0.244px">saleSystem</div>
<div class="arr" style="left:512px;top:199px"></div>
<svg style="left:529px;top:192px" width="11" height="15" viewBox="0 0 11 15"><path d="M5.5 0 V14 M0.7 9 L5.5 14 L10.3 9" fill="none" stroke="#d8d8d8" stroke-width="1.2"/></svg>
<div class="t" id="nv2" style="left:545px;top:193px;color:#e8e8e8;font-size:12px;letter-spacing:0.385px">CsaleSystemApp</div>
<div class="arr" style="left:689px;top:199px"></div>
<svg style="left:705px;top:193px" width="13" height="14" viewBox="0 0 13 14"><g fill="none" stroke="#9a6fd4" stroke-width="1.2"><path d="M6.5 0.7 L12.3 3.4 V10.6 L6.5 13.3 L0.7 10.6 V3.4 Z"/><path d="M0.7 3.4 L6.5 6.2 L12.3 3.4 M6.5 6.2 V13.3"/></g></svg>
<div class="t" style="left:722px;top:193px;color:#e8e8e8;font-size:13px">InitInstance</div>
</body></html>
